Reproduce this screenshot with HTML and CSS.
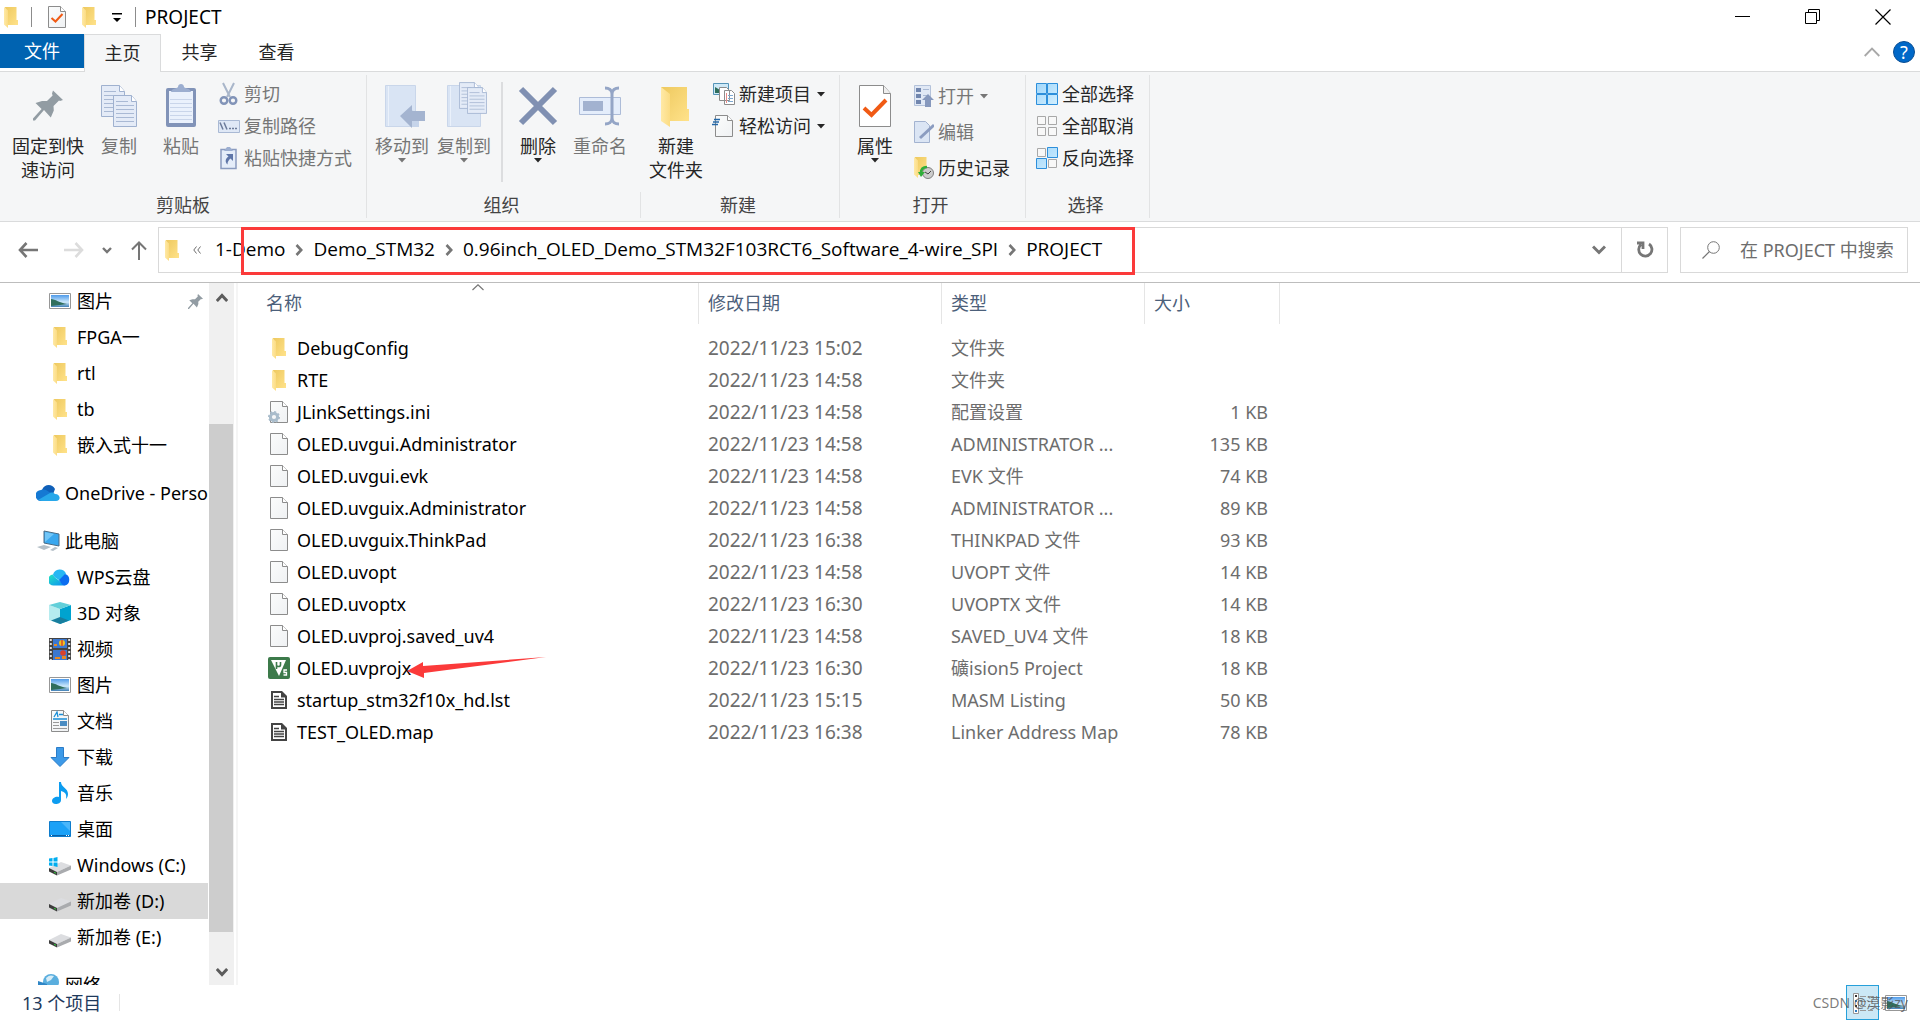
FILE: index.html
```
<!DOCTYPE html>
<html lang="zh-CN">
<head>
<meta charset="utf-8">
<title>PROJECT</title>
<link rel="stylesheet" href="styles.css">
</head>
<body>
<svg class="defs" aria-hidden="true">
  <defs>
    <linearGradient id="gFront" x1="0" y1="0" x2="1" y2="0"><stop offset="0" stop-color="#ffe9a6"/><stop offset="1" stop-color="#fbdc84"/></linearGradient>
    <linearGradient id="gBack" x1="0" y1="0" x2="1" y2="1"><stop offset="0" stop-color="#eec95f"/><stop offset="1" stop-color="#ffe28a"/></linearGradient>
    <linearGradient id="gBlue" x1="0" y1="0" x2="1" y2="1"><stop offset="0" stop-color="#9fd6fb"/><stop offset="1" stop-color="#d3effe"/></linearGradient>
    <linearGradient id="gPage" x1="0" y1="0" x2="1" y2="1"><stop offset="0" stop-color="#fbfcfc"/><stop offset="1" stop-color="#eff1f3"/></linearGradient>
    <linearGradient id="gSky" x1="0" y1="0" x2="0" y2="1"><stop offset="0" stop-color="#4f9bea"/><stop offset=".6" stop-color="#cde9fb"/><stop offset="1" stop-color="#3f7fb5"/></linearGradient>
    <linearGradient id="gWps" x1="0" y1="0" x2="1" y2="1"><stop offset="0" stop-color="#25e6c0"/><stop offset="1" stop-color="#0a8df5"/></linearGradient>
    <symbol id="folder" viewBox="0 0 14 21"><path fill="url(#gBack)" d="M1 0h11.500v13H14v5H4z"/><path fill="url(#gFront)" d="M0 0l4 3.500V21l-4-3.500z"/></symbol>
    <symbol id="page" viewBox="0 0 18 22"><path fill="url(#gPage)" stroke="#8c8c8c" d="M.5.5h12l5 5v16H.5z"/><path fill="#fff" stroke="#8c8c8c" d="M12.500.5v5h5"/></symbol>
    <symbol id="check" viewBox="0 0 18 22"><use href="#page"/><path fill="none" stroke="#f05a14" stroke-width="2" d="M3.500 12l4 3.500 7-7.500"/></symbol>
    <symbol id="pin" viewBox="0 0 30 30"><path fill="#929ca3" d="M20 0l10 9.500-3 1-1-.4-5.500 5.500.3 4.400-3 7-6.800-7.500L2 30H0v-2l8.600-9.500L2.500 12.500 9 10.600h5L19.600 5 19 3z"/></symbol>
    <symbol id="chev" viewBox="0 0 8 12"><path fill="none" stroke="#767676" stroke-width="2.600" d="M1.500 1l4.700 5-4.700 5"/></symbol>
    <symbol id="down" viewBox="0 0 8 5"><path fill="currentColor" d="M0 0h8L4 4.500z"/></symbol>
    <symbol id="photo" viewBox="0 0 22 16"><path fill="#fff" stroke="#979797" d="M.5.5h21v15H.5z"/><path fill="url(#gSky)" d="M2 2h18v12H2z"/><path fill="#2f6e5c" d="M2 6c4 0 9 4 16 5l-7 1-9 1z"/></symbol>
    <symbol id="drive" viewBox="0 0 22 14"><path fill="#dcdde0" d="M0 6L12 0l10 3.500L8 10z"/><path fill="#3c3c3c" d="M0 6l8 4v3.500L0 9.500z"/><path fill="#a9abae" d="M8 10l14-6.500v4L8 13.500z"/><path fill="#31d03a" d="M5 9.700l2 1v1l-2-1z"/></symbol>
    <symbol id="pagelines" viewBox="0 0 24 32"><path fill="#e4ebf7" stroke="#9fb1cf" d="M.5.500h18l5 6v25H.5z"/><path fill="#fff" stroke="#9fb1cf" d="M18.500.5v6h5"/><path stroke="#a9b9d4" d="M3 10.500h18M3 14.500h18M3 18.500h18M3 22.500h18M3 26.500h18M3 6.500h12"/></symbol>
    <symbol id="text" viewBox="0 0 16 18"><path fill="#444" d="M0 0h11l5 5v13H0z"/><path fill="#fff" d="M2 2h8v4.500h4V16H2z"/><path stroke="#444" stroke-width="1.300" d="M3 5.500h5M3 8.500h10M3 11h10M3 13.500h10"/><path fill="#444" d="M10 1v5h5z"/></symbol>
  </defs>
</svg>

<header class="titlebar">
  <svg class="i-folder"><use href="#folder"/></svg>
  <span class="bar"></span>
  <button class="plain quick" aria-label="属性"><svg class="i-page"><use href="#check"/></svg></button>
  <button class="plain quick" aria-label="新建文件夹"><svg class="i-folder"><use href="#folder"/></svg></button>
  <button class="plain quick" aria-label="自定义快速访问工具栏"><svg width="10" height="10" viewBox="0 0 10 10"><path d="M0 1h10v1.500H0zM1 6h8L5 10z"/></svg></button>
  <span class="bar"></span>
  <h1 class="title">PROJECT</h1>
  <div class="winbtns">
    <button class="plain" aria-label="最小化"><svg width="16" height="16" viewBox="0 0 16 16"><path stroke="#000" d="M0 7.500h15"/></svg></button>
    <button class="plain" aria-label="还原"><svg width="16" height="16" viewBox="0 0 16 16"><path fill="none" stroke="#000" d="M.5 3.500h11v11H.5zM3.500 3.500v-3h11v11h-3"/></svg></button>
    <button class="plain" aria-label="关闭"><svg width="16" height="16" viewBox="0 0 16 16"><path stroke="#000" stroke-width="1.200" d="M.5.5l15 15M15.500.5l-15 15"/></svg></button>
  </div>
</header>

<nav class="tabs">
  <button class="tab file">文件</button>
  <button class="tab active">主页</button>
  <button class="tab">共享</button>
  <button class="tab">查看</button>
  <div class="tabs-end">
    <button class="plain" aria-label="最小化功能区"><svg width="16" height="10" viewBox="0 0 16 10"><path fill="none" stroke="#a8a8a8" stroke-width="1.800" d="M.7 9L8 1.500 15.300 9"/></svg></button>
    <button class="plain help" aria-label="帮助">?</button>
  </div>
</nav>

<section class="ribbon">
  <div class="group g-clip">
    <div class="tools">
      <button class="big wide"><svg class="ico" viewBox="0 0 46 46"><use href="#pin" x="8" y="8" width="30" height="31"/></svg><span>固定到快<br>速访问</span></button>
      <button class="big off"><svg class="ico" viewBox="0 0 46 46"><use href="#pagelines" x="5" y="3" width="24" height="32"/><use href="#pagelines" x="17" y="13" width="24" height="32"/></svg><span>复制</span></button>
      <button class="big off"><svg class="ico" viewBox="0 0 46 46"><rect x="8" y="6" width="30" height="39" rx="2" fill="#8193b8"/><path fill="#eaf1fc" d="M11 9h24v32H11z"/><path stroke="#c9d5ea" d="M12 17.500h22M12 21.500h22M12 25.500h22M12 29.500h22M12 33.500h22M12 37.500h22"/><path fill="#9caed0" d="M13 10c1-4 5-3 7-5 0-4 6-4 6 0 2 2 6 1 7 5z"/></svg><span>粘贴</span></button>
      <div class="smalls">
        <button class="small off"><svg class="sico" viewBox="0 0 24 24"><path fill="none" stroke="#a9b6ca" stroke-width="2" d="M7 1l7 14M18 1l-7 14"/><circle cx="8" cy="18.500" r="3.300" fill="none" stroke="#8294b8" stroke-width="2.400"/><circle cx="17" cy="18.500" r="3.300" fill="none" stroke="#8294b8" stroke-width="2.400"/></svg>剪切</button>
        <button class="small off"><svg class="sico" viewBox="0 0 24 24"><path fill="#dfe8f6" stroke="#a9b9d4" d="M2.500 6.500h21v12h-21z"/><path stroke="#6c7b9a" stroke-width="1.500" d="M4 8.500l3 7M8 8.500l3 7"/><path stroke="#6c7b9a" stroke-width="1.500" stroke-dasharray="2 1" d="M13 14.500h9"/></svg>复制路径</button>
        <button class="small off"><svg class="sico" viewBox="0 0 24 24"><path fill="#e5edf9" stroke="#8a9bbf" stroke-width="1.500" d="M5 3.500h15v19H5z"/><path fill="#9caed0" d="M8 5l3-4h3l3 4z"/><path fill="#5f76a8" d="M10 8h7v7l-2.500-2.500c-2 2-3 3-3 6-3-3-2-6 1-8z"/></svg>粘贴快捷方式</button>
      </div>
    </div>
    <div class="label">剪贴板</div>
  </div>

  <div class="group g-org">
    <div class="tools">
      <button class="big off"><svg class="ico" viewBox="0 0 46 46"><path fill="#d9e4f4" stroke="#c9d6ea" d="M6.500 3.500h30v41h-30z"/><path fill="#c6d4ea" d="M33 28l7 5v12h-7z"/><path stroke="#eaf1fb" d="M9.500 4v40"/><path fill="#a4b4d0" d="M21 34l12-11v6h13v10H33v7z"/></svg><span>移动到</span><svg class="caret"><use href="#down"/></svg></button>
      <button class="big off"><svg class="ico" viewBox="0 0 46 46"><path fill="#d9e4f4" stroke="#c9d6ea" d="M6.500 3.500h33v41h-33z"/><path stroke="#eaf1fb" d="M9.500 4v40"/><use href="#pagelines" x="18" y="0" width="20" height="27"/><use href="#pagelines" x="26" y="5" width="20" height="27"/></svg><span>复制到</span><svg class="caret"><use href="#down"/></svg></button>
      <span class="rule"></span>
      <button class="big"><svg class="ico" viewBox="0 0 46 46"><path stroke="#8090b2" stroke-width="6" d="M6 7l34 34M40 7L6 41"/></svg><span>删除</span><svg class="caret"><use href="#down"/></svg></button>
      <button class="big off"><svg class="ico" viewBox="0 0 46 46"><path fill="#e4edfb" stroke="#adbcd8" d="M2.500 15.500h41v17h-41z"/><path fill="#a2b2d0" d="M6 19h20v10H6z"/><path fill="none" stroke="#94a5c6" stroke-width="3" d="M28 6c4 0 7 2 7 6v24c0 4-3 6-7 6M42 6c-4 0-7 2-7 6v24c0 4 3 6 7 6"/></svg><span>重命名</span></button>
    </div>
    <div class="label">组织</div>
  </div>

  <div class="group g-new">
    <div class="tools">
      <button class="big"><svg class="ico" viewBox="0 0 46 46"><path fill="url(#gBack)" d="M8 5h26v22h2v12H16z"/><path fill="url(#gFront)" d="M8 5l9 7v33l-9-6z"/></svg><span>新建<br>文件夹</span></button>
      <div class="smalls">
        <button class="small"><svg class="sico" viewBox="0 0 24 24"><path fill="#cfe9f7" stroke="#5594b8" d="M2.500 1.500h15v11h-15z"/><path fill="#2f6e5c" d="M4 5l5 3v3H4z"/><path fill="#fff" stroke="#8c8c8c" d="M8.500 5.500h7l3 3v10h-10zM13.500 8.500h7l3 3v11h-10z"/><path stroke="#7fa8cf" d="M17 13.500h5M17 16.500h5M17 19.500h5"/><path stroke="#e58a8a" d="M15.500 11v10"/></svg>新建项目<svg class="caret"><use href="#down"/></svg></button>
        <button class="small"><svg class="sico" viewBox="0 0 24 24"><use href="#page" x="4" y="1" width="18" height="22"/><path stroke="#2468a8" stroke-width="1.600" d="M3 5.500h6M2 8h6M1 10.500h6"/></svg>轻松访问<svg class="caret"><use href="#down"/></svg></button>
      </div>
    </div>
    <div class="label">新建</div>
  </div>

  <div class="group g-open">
    <div class="tools">
      <button class="big"><svg class="ico" viewBox="0 0 46 46"><path fill="#fff" stroke="#8c8c8c" d="M7.500 3.500h24l7 8v33h-31z"/><path fill="#eee" stroke="#8c8c8c" d="M31.500 3.500v8h7"/><path fill="none" stroke="#f05a14" stroke-width="4" d="M12 26l7.500 7L34 18"/></svg><span>属性</span><svg class="caret"><use href="#down"/></svg></button>
      <div class="smalls loose">
        <button class="small off"><svg class="sico" viewBox="0 0 24 24"><path fill="#e0e8f5" stroke="#b4c2da" d="M4.500 1.500h16v20h-16z"/><path fill="#7186ae" d="M6 4h5v4H6zM6 10h5v4H6zM6 16h5v4H6z"/><path stroke="#a9b9d4" d="M13 5.500h6M13 11.500h5"/><path fill="#8698bd" d="M18 10l6 6h-3v7h-6v-7h-3z"/></svg>打开<svg class="caret"><use href="#down"/></svg></button>
        <button class="small off"><svg class="sico" viewBox="0 0 24 24"><path fill="#dbe5f4" stroke="#a3b3d0" d="M4.500 1.500h11l4 4v17h-15z"/><path stroke="#8b9cc0" stroke-width="3" d="M10 18L24 5"/></svg>编辑</button>
        <button class="small"><svg class="sico" viewBox="0 0 24 24"><use href="#folder" x="4" y="1" width="14" height="21"/><circle cx="18" cy="17" r="5.500" fill="#ccc" stroke="#808080"/><path fill="none" stroke="#444" d="M15 16l3 2 3-3"/><path fill="none" stroke="#2fae3a" stroke-width="2.500" d="M17 11c-4 0-6 2-6 6"/><path fill="#2fae3a" d="M8 16h7l-4 5z"/></svg>历史记录</button>
      </div>
    </div>
    <div class="label">打开</div>
  </div>

  <div class="group g-select">
    <div class="tools">
      <div class="smalls">
        <button class="small"><svg class="sico" viewBox="0 0 24 24"><path fill="url(#gBlue)" stroke="#2d8fdb" d="M2.500 1.500h10v10h-10zM13.500 1.500h10v10h-10zM2.500 12.500h10v10h-10zM13.500 12.500h10v10h-10z"/></svg>全部选择</button>
        <button class="small"><svg class="sico" viewBox="0 0 24 24"><path fill="#f8f8f8" stroke="#a8a8a8" d="M3.500 2.500h8v8h-8zM14.500 2.500h8v8h-8zM3.500 13.500h8v8h-8zM14.500 13.500h8v8h-8z"/></svg>全部取消</button>
        <button class="small"><svg class="sico" viewBox="0 0 24 24"><path fill="#f8f8f8" stroke="#a8a8a8" d="M3.500 2.500h8v8h-8zM14.500 13.500h8v8h-8z"/><path fill="url(#gBlue)" stroke="#2d8fdb" d="M13.500 1.500h10v10h-10zM2.500 12.500h10v10h-10z"/></svg>反向选择</button>
      </div>
    </div>
    <div class="label">选择</div>
  </div>
</section>

<section class="addressbar">
  <div class="history">
    <button class="plain" aria-label="后退"><svg width="20" height="16" viewBox="0 0 20 16"><path fill="none" stroke="#767676" stroke-width="2.600" d="M8.500 1L2 8l6.500 7M2 8h18"/></svg></button>
    <button class="plain" aria-label="前进"><svg width="20" height="16" viewBox="0 0 20 16"><path fill="none" stroke="#dcdcdc" stroke-width="2.600" d="M11.500 1L18 8l-6.500 7M18 8H0"/></svg></button>
    <button class="plain narrow" aria-label="最近浏览的位置"><svg width="10" height="7" viewBox="0 0 10 7"><path fill="none" stroke="#767676" stroke-width="2.400" d="M1 1l4 4 4-4"/></svg></button>
    <button class="plain" aria-label="上移"><svg width="16" height="19" viewBox="0 0 16 19"><path fill="none" stroke="#767676" stroke-width="2" d="M1 8.500L8 1.500l7 7M8 2v17"/></svg></button>
  </div>
  <div class="path">
    <svg class="i-folder"><use href="#folder"/></svg>
    <button class="plain more" aria-label="上级文件夹"><svg width="8" height="8" viewBox="0 0 8 8"><path fill="none" stroke="#6d6d6d" d="M3.500.5L.8 4l2.700 3.500M7.500.5L4.800 4l2.700 3.500"/></svg></button>
    <a href="#">1-Demo</a><svg class="chev"><use href="#chev"/></svg>
    <a href="#">Demo_STM32</a><svg class="chev"><use href="#chev"/></svg>
    <a href="#">0.96inch_OLED_Demo_STM32F103RCT6_Software_4-wire_SPI</a><svg class="chev"><use href="#chev"/></svg>
    <a href="#">PROJECT</a>
    <button class="plain drop" aria-label="以前的位置"><svg width="14" height="10" viewBox="0 0 14 10"><path fill="none" stroke="#767676" stroke-width="3" d="M1 1.500l6 6 6-6"/></svg></button>
    <button class="plain refresh" aria-label="刷新"><svg width="18" height="18" viewBox="0 0 18 18"><path fill="none" stroke="#767676" stroke-width="2.800" d="M13 3a6.600 6.600 0 1 1-8 .5M1 2h6v6"/></svg></button>
  </div>
  <label class="search">
    <svg width="18" height="18" viewBox="0 0 18 18"><circle cx="11.500" cy="6.500" r="5.800" fill="none" stroke="#767676"/><path stroke="#767676" stroke-width="1.200" d="M7.500 10.500l-7 7"/></svg>
    <input type="text" placeholder="在 PROJECT 中搜索" aria-label="在 PROJECT 中搜索">
  </label>
</section>

<div class="highlight"></div>

<main class="content">
  <nav class="sidebar">
    <div class="cluster">
      <a class="leaf" href="#"><svg class="nico"><use href="#photo"/></svg>图片<svg class="pinned"><use href="#pin"/></svg></a>
      <a class="leaf" href="#"><svg class="nico tall"><use href="#folder"/></svg>FPGA一</a>
      <a class="leaf" href="#"><svg class="nico tall"><use href="#folder"/></svg>rtl</a>
      <a class="leaf" href="#"><svg class="nico tall"><use href="#folder"/></svg>tb</a>
      <a class="leaf" href="#"><svg class="nico tall"><use href="#folder"/></svg>嵌入式十一</a>
    </div>
    <div class="cluster">
      <a class="root" href="#"><svg class="rico" viewBox="0 0 24 24"><path fill="#0f5fb8" d="M6 9c2-6 10-7 13-1l-3 8z"/><path fill="#1579d3" d="M5 20a5.500 5.500 0 0 1 0-11c3-1 6 0 8 2l6 3-8 5z"/><path fill="#28a8ea" d="M2 19l12-7c2-1 4 0 5 1 6 0 6 7 1 7H6z"/></svg>OneDrive - Personal</a>
    </div>
    <div class="cluster">
      <a class="root" href="#"><svg class="rico" viewBox="0 0 24 24"><path fill="#39a7ee" stroke="#4c6b84" d="M8 2l15 3v12L8 14z"/><path fill="#71c6f8" d="M9 3l9 2-9 8z"/><path fill="#b5c0c8" d="M1 18l7-2 7 2-7 3zM14 21l5-3 3 1-5 3z"/></svg>此电脑</a>
      <a class="leaf" href="#"><svg class="nico" viewBox="0 0 22 22"><path fill="url(#gWps)" d="M5 19.500a5.500 5.500 0 0 1-1-11c1 3 4 4 6 6l6 5z"/><path fill="#27b7f3" d="M4 8.500a7 7 0 0 1 13-1L11 15C8 12 5 12 4 8.500z"/><path fill="#0b6df0" d="M10 14l6-6a6 6 0 0 1 0 11.500c-3 0-4-3-6-5.500z"/></svg>WPS云盘</a>
      <a class="leaf" href="#"><svg class="nico" viewBox="0 0 22 22"><path fill="#b6ecef" d="M0 3l11 4v15L0 18z"/><path fill="#00a3cf" d="M22 3L11 7v15l11-4z"/><path fill="#62cfd9" d="M0 3l11-3 11 3-11 4z"/><path fill="#187e9e" d="M2 18.500l9-3.500 9 3.500-9 3.500z"/></svg>3D 对象</a>
      <a class="leaf" href="#"><svg class="nico" viewBox="0 0 22 22"><path fill="#444" d="M0 0h22v22H0z"/><path fill="#3b78d0" d="M4 1h14v9H4zM4 12h14v10H4z"/><path stroke="#ddd" stroke-width="2" stroke-dasharray="2 2" d="M1.800 1v21M20.200 1v21"/><circle cx="13" cy="5" r="3" fill="#f2c21b"/><path fill="#d8402b" d="M12.300 2h1.400v6h-1.400z"/><circle cx="14" cy="15" r="2.800" fill="#d8402b"/><path fill="#e88820" d="M5 6h3v2H5zM6 19h5v2H6zM13 18h4v3h-4z"/></svg>视频</a>
      <a class="leaf" href="#"><svg class="nico"><use href="#photo"/></svg>图片</a>
      <a class="leaf" href="#"><svg class="nico" viewBox="0 0 22 22"><use href="#page" x="2" width="18" height="22"/><path stroke="#1b8fd8" stroke-width="1.300" fill="none" d="M5 7l3-5 1 5M10 4.500h4M4 9h14"/><path stroke="#999" d="M4 12.500h6M4 15.500h6M4 18.500h14"/><path fill="#4a8cc2" d="M11 11h7v5h-7z"/></svg>文档</a>
      <a class="leaf" href="#"><svg class="nico" viewBox="0 0 22 22"><path fill="#3d9ae8" stroke="#2b7cc8" d="M7.500 1.500h7v10h5.500l-9 9-9-9h5.500z"/></svg>下载</a>
      <a class="leaf" href="#"><svg class="nico" viewBox="0 0 22 22"><path fill="#0c9cf0" d="M10 0h2c0 5 7 6 7 12 0 2-1 4-2 5 1-5-1-7-5-8v9c0 3-3 4-5 4-3 0-4-2-4-3 0-3 4-5 7-4z"/></svg>音乐</a>
      <a class="leaf" href="#"><svg class="nico" viewBox="0 0 22 22"><path fill="#1ba1f7" stroke="#0e7ccc" d="M.5 3.500h21v15H.5z"/><path fill="#49b6fb" d="M12 4h9v9z"/><path stroke="#0a5fa5" d="M1 17.500h20"/><path stroke="#fff" d="M2 17.500h1M17 17.500h1M19 17.500h1"/></svg>桌面</a>
      <a class="leaf" href="#"><svg class="nico" viewBox="0 0 22 22"><use href="#drive" y="8" width="22" height="14"/><path fill="#00adef" d="M0 4.500L3.500 4v3.500H0zM4.500 4L8.500 3v4.500h-4zM0 8.500h3.500V12L0 11.500zM4.500 8.500h4V13l-4-1z"/></svg>Windows (C:)</a>
      <a class="leaf selected" href="#"><svg class="nico" viewBox="0 0 22 22"><use href="#drive" y="8" width="22" height="14"/></svg>新加卷 (D:)</a>
      <a class="leaf" href="#"><svg class="nico" viewBox="0 0 22 22"><use href="#drive" y="8" width="22" height="14"/></svg>新加卷 (E:)</a>
    </div>
    <div class="cluster">
      <a class="root" href="#"><svg class="rico" viewBox="0 0 24 24"><circle cx="15" cy="9" r="8" fill="#5aaede"/><path fill="#d6ecf7" d="M10 5c3-3 5-3 8-2l-3 4-4 2z"/><path fill="#2f86c6" d="M2 8l9 3v10L2 18z"/></svg>网络</a>
    </div>
  </nav>
  <div class="scroll" aria-hidden="true">
    <svg class="sarrow" viewBox="0 0 12 9"><path fill="none" stroke="#5c5c5c" stroke-width="3" d="M.8 8L6 2.500 11.200 8"/></svg>
    <div class="track"><div class="thumb"></div></div>
    <svg class="sarrow" viewBox="0 0 12 9"><path fill="none" stroke="#5c5c5c" stroke-width="3" d="M.8 1L6 6.500 11.200 1"/></svg>
  </div>
  <section class="files">
    <table>
      <colgroup><col class="c-name"><col class="c-date"><col class="c-type"><col class="c-size"></colgroup>
      <thead><tr><th>名称<svg class="sort" viewBox="0 0 12 7"><path fill="none" stroke="#767676" stroke-width="1.200" d="M.5 6L6 .8 11.500 6"/></svg></th><th>修改日期</th><th>类型</th><th>大小</th></tr></thead>
      <tbody>
        <tr><td><svg class="fico tall"><use href="#folder"/></svg>DebugConfig</td><td>2022/11/23 15:02</td><td>文件夹</td><td></td></tr>
        <tr><td><svg class="fico tall"><use href="#folder"/></svg>RTE</td><td>2022/11/23 14:58</td><td>文件夹</td><td></td></tr>
        <tr><td><svg class="fico" viewBox="0 0 22 22"><use href="#page" x="2" width="18" height="22"/><circle cx="6" cy="16" r="3.600" fill="none" stroke="#a9bccb" stroke-width="3"/><circle cx="6" cy="16" r="5.200" fill="none" stroke="#a9bccb" stroke-width="1.600" stroke-dasharray="2 2"/></svg>JLinkSettings.ini</td><td>2022/11/23 14:58</td><td>配置设置</td><td>1 KB</td></tr>
        <tr><td><svg class="fico"><use href="#page"/></svg>OLED.uvgui.Administrator</td><td>2022/11/23 14:58</td><td>ADMINISTRATOR ...</td><td>135 KB</td></tr>
        <tr><td><svg class="fico"><use href="#page"/></svg>OLED.uvgui.evk</td><td>2022/11/23 14:58</td><td>EVK 文件</td><td>74 KB</td></tr>
        <tr><td><svg class="fico"><use href="#page"/></svg>OLED.uvguix.Administrator</td><td>2022/11/23 14:58</td><td>ADMINISTRATOR ...</td><td>89 KB</td></tr>
        <tr><td><svg class="fico"><use href="#page"/></svg>OLED.uvguix.ThinkPad</td><td>2022/11/23 16:38</td><td>THINKPAD 文件</td><td>93 KB</td></tr>
        <tr><td><svg class="fico"><use href="#page"/></svg>OLED.uvopt</td><td>2022/11/23 14:58</td><td>UVOPT 文件</td><td>14 KB</td></tr>
        <tr><td><svg class="fico"><use href="#page"/></svg>OLED.uvoptx</td><td>2022/11/23 16:30</td><td>UVOPTX 文件</td><td>14 KB</td></tr>
        <tr><td><svg class="fico"><use href="#page"/></svg>OLED.uvproj.saved_uv4</td><td>2022/11/23 14:58</td><td>SAVED_UV4 文件</td><td>18 KB</td></tr>
        <tr><td><svg class="fico" viewBox="0 0 22 22"><rect width="22" height="22" rx="2" fill="#3c7a4a"/><path fill="#fff" d="M3 3h15l-7 16z"/><path fill="none" stroke="#3c7a4a" stroke-width="1.600" d="M8.500 12V5M8.500 8c0 2 4 2 4 0V5"/><path fill="none" stroke="#fff" stroke-width="1.300" d="M19 13h-3v2.500h2.500V18H15.500"/></svg>OLED.uvprojx<svg class="pointer" viewBox="0 0 140 22"><path fill="#fb3a3a" d="M1 14L17 5v4L140 0 18 16v5z"/></svg></td><td>2022/11/23 16:30</td><td>礦ision5 Project</td><td>18 KB</td></tr>
        <tr><td><svg class="fico doc"><use href="#text"/></svg>startup_stm32f10x_hd.lst</td><td>2022/11/23 15:15</td><td>MASM Listing</td><td>50 KB</td></tr>
        <tr><td><svg class="fico doc"><use href="#text"/></svg>TEST_OLED.map</td><td>2022/11/23 16:38</td><td>Linker Address Map</td><td>78 KB</td></tr>
      </tbody>
    </table>
  </section>
</main>

<footer class="status">
  <span class="count">13 个项目</span>
  <span class="sep"></span>
  <div class="views">
    <button class="plain view on" aria-label="详细信息"><svg width="22" height="22" viewBox="0 0 22 22"><path fill="#fff" stroke="#979797" d="M1.500 1.500h5v20h-5z"/><path fill="#333" d="M3 3h2v2H3zM3 13h2v2H3z"/><path fill="#2a7ac0" d="M3 8h2v2H3zM3 18h2v2H3z"/><path stroke="#999" d="M8 4.500h6M16 4.500h5M8 9.500h6M16 9.500h5M8 14.500h6M16 14.500h5M8 18.500h6M16 18.500h5"/></svg></button>
    <button class="plain view" aria-label="大缩略图"><svg width="22" height="16"><use href="#photo"/></svg></button>
    <span class="mark">CSDN @漠影zy</span>
  </div>
</footer>
</body>
</html>
```
FILE: styles.css
```
* { box-sizing: border-box; }

body {
  margin: 0;
  height: 100vh;
  display: flex;
  flex-direction: column;
  overflow: hidden;
  background: #fff;
  color: #000;
  font: 18px/24px "Noto Sans", "Noto Sans CJK SC", sans-serif;
}

button, input { font: inherit; color: inherit; }
button { padding: 0; border: 0; background: none; }
a { color: inherit; text-decoration: none; }
svg { display: block; flex: none; }
.defs { position: absolute; width: 0; height: 0; }
.plain { display: flex; align-items: center; justify-content: center; }

.i-folder { width: 14px; height: 21px; }
.i-page { width: 18px; height: 22px; }

/* Title bar */
.titlebar { display: flex; align-items: center; flex: none; height: 34px; padding-left: 4px; }
.bar { width: 1px; height: 20px; margin-left: 13px; background: #8c8c8c; }
.quick { margin-left: 16px; }
.title { margin: 0 0 0 9px; font-size: 19px; font-weight: 400; }
.winbtns { display: flex; margin-left: auto; padding-right: 2px; }
.winbtns .plain { width: 70px; height: 34px; }

/* Ribbon tabs */
.tabs { display: flex; align-items: flex-start; flex: none; height: 37px; color: #262626; }
.tab { width: 77px; height: 36px; }
.tab.file { width: 84px; height: 34px; background: #0063b1; color: #fff; }
.tab.active { height: 38px; padding-bottom: 2px; border: 1px solid #dadbdc; border-bottom: 0; background: #f5f6f7; z-index: 1; }
.tabs-end { display: flex; align-items: center; gap: 13px; height: 36px; margin-left: auto; padding-right: 5px; }
.help { width: 22px; height: 22px; border-radius: 50%; border: 1px solid #0b4f94; background: #0068c8; color: #fff; line-height: 20px; }

/* Ribbon */
.ribbon { display: flex; height: 151px; padding: 3px 0; flex: none; background: #f5f6f7; border: 1px solid #dadbdc; border-width: 1px 0; }
.group { display: flex; flex-direction: column; justify-content: space-between; border-right: 1px solid #e2e3e4; }
.g-clip { width: 367px; }
.g-org { width: 274px; border-right: 0; }
.g-new { width: 199px; }
.g-open { width: 186px; }
.g-select { width: 124px; }
.tools { display: flex; gap: 8px; padding: 3px 8px 0; }
.g-clip .tools { padding-left: 12px; }
.label { height: 26px; padding-right: 4px; line-height: 26px; text-align: center; color: #444; }
.g-clip .label { padding-right: 0; }
.g-org .label { border-right: 1px solid #e2e3e4; }
.big { display: flex; flex-direction: column; align-items: center; width: 54px; white-space: nowrap; color: #262626; }
.big.wide { width: 72px; }
.ico { width: 46px; height: 46px; margin: 4px 0 6px; }
.caret { width: 8px; height: 5px; }
.off { color: #767676; }
.rule { width: 2px; height: 100px; margin: 4px 0 0 2px; background: #dcdddf; }
.smalls { display: flex; flex-direction: column; }
.small { display: flex; align-items: center; gap: 4px; height: 32px; color: #262626; white-space: nowrap; }
.small.off { color: #767676; }
.small .caret { margin-left: 2px; }
.loose .small { height: 36px; }
.sico { width: 24px; height: 24px; }

/* Address bar */
.addressbar { display: flex; align-items: center; flex: none; height: 61px; padding: 0 12px 4px 0; border-bottom: 1px solid #bdbdbd; }
.history { display: flex; width: 158px; padding-left: 5px; }
.history .plain { width: 46px; height: 30px; }
.history .narrow { width: 20px; margin-right: 4px; }
.history .plain:last-child { width: 36px; }
.path { display: flex; align-items: center; flex: 1; height: 46px; padding-left: 6px; border: 1px solid #d9d9d9; font-family: "Open Sans", sans-serif; font-size: 19px; }
.path a { padding-bottom: 2px; }
.more { width: 36px; height: 30px; }
.chev { width: 8px; height: 12px; margin: 0 10px; }
.drop { width: 44px; height: 44px; margin-left: auto; }
.refresh { width: 46px; height: 44px; border-left: 1px solid #d9d9d9; }
.search { display: flex; align-items: center; gap: 20px; width: 228px; height: 46px; margin-left: 12px; padding-left: 21px; border: 1px solid #d9d9d9; }
.search input { flex: 1; min-width: 0; padding: 0; border: 0; outline: 0; background: none; }
.search input::placeholder { color: #6d6d6d; opacity: 1; }

.highlight { position: absolute; left: 241px; top: 227px; width: 894px; height: 48px; border: 3px solid #fb3a3a; }

/* Main area */
.content { display: flex; flex: 1; min-height: 0; }
.sidebar { display: flex; flex-direction: column; gap: 12px; width: 209px; overflow: hidden; padding-right: 1px; white-space: nowrap; }
.cluster { flex: none; }
.leaf, .root { display: flex; align-items: center; height: 36px; overflow: hidden; }
.leaf { gap: 6px; padding-left: 49px; }
.root { gap: 5px; padding-left: 36px; }
.selected { background: #d9d9d9; }
.nico { width: 22px; height: 22px; }
.nico.tall { height: 21px; }
.rico { width: 24px; height: 24px; }
.pinned { width: 15px; height: 15px; margin: 0 5px 0 auto; }
.scroll { display: flex; flex-direction: column; align-items: center; width: 25px; background: #f0f0f0; }
.sarrow { width: 12px; height: 9px; margin: 10px 0 8px; }
.track { display: flex; flex: 1; width: 100%; padding-top: 114px; padding-bottom: 26px; }
.thumb { flex: 1; margin-right: 1px; background: #cdcdcd; }
.files { flex: 1; margin-left: 2px; border-left: 2px solid #f5f5f5; overflow: hidden; }

table { width: 1042px; table-layout: fixed; border-collapse: separate; border-spacing: 0; }
.c-name { width: 461px; }
.c-date { width: 243px; }
.c-type { width: 203px; }
.c-size { width: 135px; }
th { position: relative; height: 41px; padding: 0 9px 2px; border-right: 1px solid #e5e5e5; text-align: left; font-weight: 400; color: #4c607a; }
th:first-child { padding-left: 28px; }
.sort { position: absolute; left: 234px; top: 1px; width: 12px; height: 7px; }
tbody::before { content: ""; display: block; height: 8px; }
td { height: 32px; padding: 0 9px; white-space: nowrap; color: #6d6d6d; }
td:first-child { position: relative; display: flex; align-items: center; gap: 7px; padding-left: 30px; color: #000; }
td:nth-child(2) { font-size: 19px; }
td:last-child { padding-right: 12px; text-align: right; }
.fico { width: 22px; height: 22px; }
.fico.tall { height: 21px; }
.fico.doc { height: 18px; }
.pointer { position: absolute; left: 168px; top: 5px; width: 140px; height: 22px; }

/* Status bar */
.status { display: flex; align-items: center; flex: none; height: 35px; padding: 0 8px 0 22px; color: #1e395b; }
.sep { width: 1px; height: 17px; margin-left: 18px; background: #e5e5e5; }
.views { position: relative; display: flex; margin-left: auto; }
.view { width: 33px; height: 35px; }
.view.on { border: 1px solid #26a0da; background: #cbe8f6; }
.mark { position: absolute; right: 4px; top: 8px; font-size: 14px; line-height: 20px; white-space: nowrap; color: rgba(80, 80, 80, .75); }
```
